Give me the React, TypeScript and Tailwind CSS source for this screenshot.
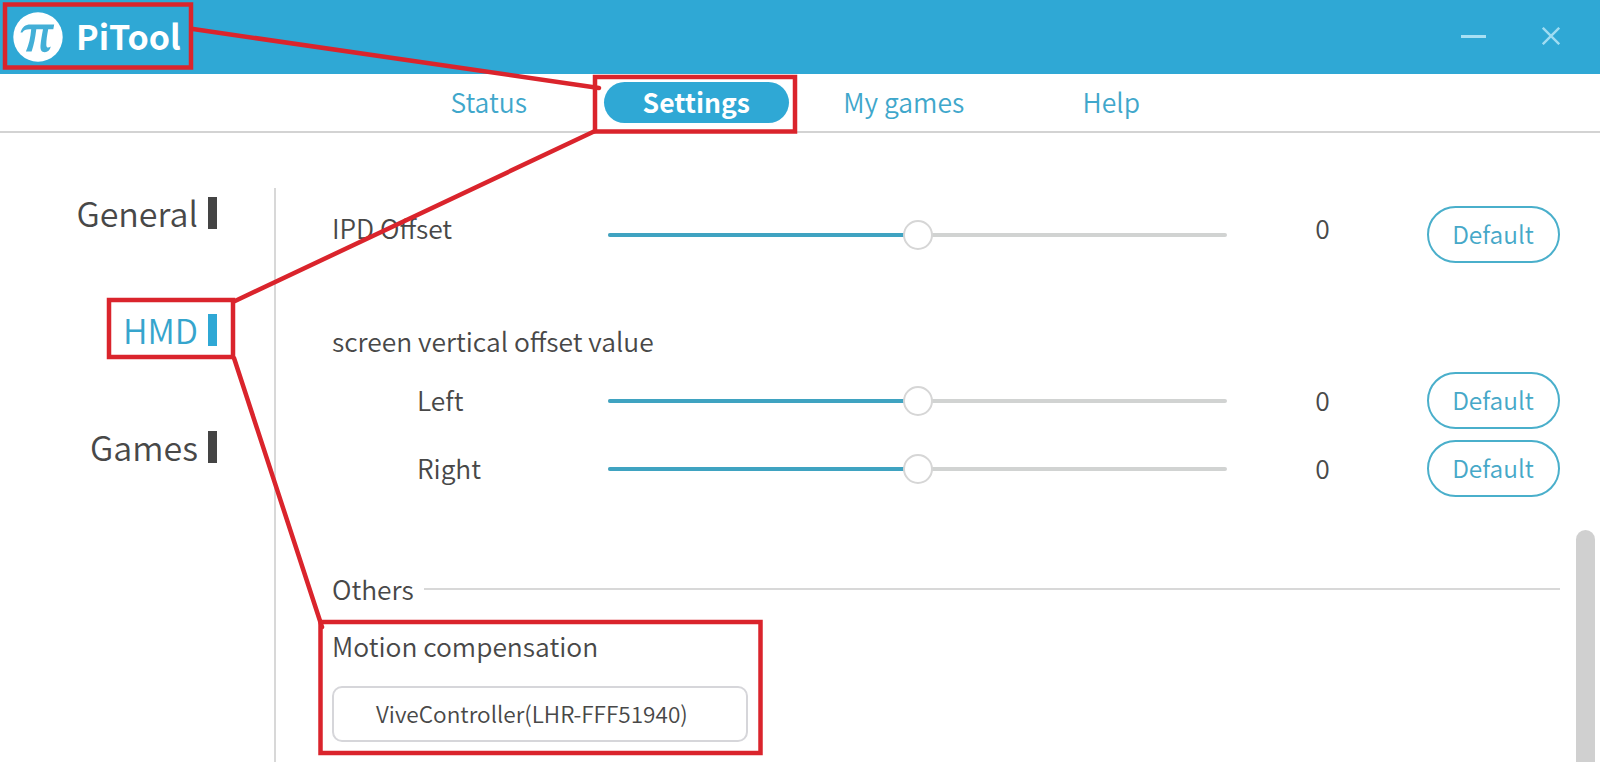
import { clsx } from "clsx";

const NAV_ITEMS = ["Status", "Settings", "My games", "Help"];
const SIDE_ITEMS = ["General", "HMD", "Games"];

function Logo() {
  return (
    <svg width="50" height="50" viewBox="0 0 50 50">
      <circle cx="25" cy="25" r="24.7" fill="#fff" />
      <path
        fill="#43afd7"
        d="M7.5 20.5C9.5 14.8 12.2 12.6 17.5 12.6H41.2L40.3 17.2H35.2C34 23.5 33.3 28.5 33.3 32.5C33.3 36 35 36.2 37.8 34.6C37 38.2 34.6 40.2 31.8 40.2C28.4 40.2 27.2 37.6 27.5 33.5C27.9 28.5 28.9 23 30 17.2H23.3C22.2 26 20.9 33 18.6 39.6H12.9C15.9 32.5 17.5 25.5 18.2 17.2H16.4C12.6 17.2 10.8 18 9.4 20.5Z"
      />
    </svg>
  );
}

function TitleBar() {
  return (
    <header className="flex h-[74px] items-center justify-between bg-[#2fa8d5] pl-[13px] pr-10">
      <div className="flex items-center gap-[13px]">
        <Logo />
        <span className="pb-[3px] text-[34px] font-bold leading-[67px] text-white">PiTool</span>
      </div>
      <div className="flex items-center gap-14 pb-[2px]">
        <span className="h-[3px] w-[25px] bg-[#a8e0f4]" />
        <svg width="18" height="18" viewBox="0 0 18 18" stroke="#a0dcf2" strokeWidth="2.4">
          <path d="M0.8 0.8L17.2 17.2M17.2 0.8L0.8 17.2" />
        </svg>
      </div>
    </header>
  );
}

function Nav({ active }: { active: string }) {
  return (
    <nav className="flex h-[59px] border-b-2 border-[#d3d3d3] pl-[385px] pt-2">
      {NAV_ITEMS.map(item => (
        <div key={item} className="flex w-[207.5px] justify-center">
          <span
            className={clsx(
              "flex h-[41px] w-[185px] items-center justify-center rounded-full pb-px text-[26.5px] leading-none",
              item === active ? "bg-[#2fa8d5] font-bold text-white" : "font-[350] text-[#3fa7cb]",
            )}
          >
            {item}
          </span>
        </div>
      ))}
    </nav>
  );
}

function Sidebar({ active }: { active: string }) {
  return (
    <aside className="w-[274px] pt-[21px]">
      {SIDE_ITEMS.map(item => (
        <div key={item} className="flex h-[117px] items-center justify-end gap-[10px] pr-[57px]">
          <span
            className={clsx(
              "text-[34px] font-[350] leading-none",
              item === active ? "text-[#36a5cd]" : "text-[#484848]",
            )}
          >
            {item}
          </span>
          <span className={clsx("h-8 w-[9px]", item === active ? "bg-[#2fa8d5]" : "bg-[#444]")} />
        </div>
      ))}
    </aside>
  );
}

function Slider({ value }: { value: number }) {
  // range is -50..50, 0 sits in the middle
  const pct = value + 50;
  return (
    <div className="relative flex h-[30px] w-[619px] items-center">
      <div className="h-1 w-full overflow-hidden rounded-full bg-[#d1d3d2]">
        <div className="h-full bg-[#3fa3c1]" style={{ width: `${pct}%` }} />
      </div>
      <span
        className="absolute size-[30px] -translate-x-1/2 rounded-full border-2 border-[#d6d6d6] bg-white"
        style={{ left: `${pct}%` }}
      />
    </div>
  );
}

function OffsetRow({ label, value, indent, raised }: { label: string; value: number; indent?: boolean; raised?: boolean }) {
  const lift = raised ? "pb-[12px]" : "pb-px";
  return (
    <div className="flex h-[57px] items-center">
      <span className={clsx("w-[276px]", lift, indent && "pl-[85px]")}>{label}</span>
      <Slider value={value} />
      <span className={clsx("w-[191px] text-center", lift)}>{value}</span>
      <button className="ml-[9px] h-[57px] w-[133px] rounded-full border-2 border-[#4aafcb] pr-px text-[24.5px] text-[#46a8c8]">
        Default
      </button>
    </div>
  );
}

function HmdSettings() {
  return (
    <main className="flex flex-1 flex-col border-l-2 border-[#d8d8d8] text-[26.4px] font-[350] leading-none text-[#484848]">
      <div className="flex flex-col pl-[56px] pt-[18px]">
        <OffsetRow label="IPD Offset" value={0} raised />
        <h2 className="mt-[65px] h-[44px]">screen vertical offset value</h2>
        <OffsetRow label="Left" value={0} indent />
        <div className="mt-[11px]">
          <OffsetRow label="Right" value={0} indent />
        </div>
        <div className="mt-[77px] flex h-[29px] items-center gap-[10px] pr-[40px]">
          <span className="pt-px">Others</span>
          <span className="h-[2px] flex-1 bg-[#d8d8d8]" />
        </div>
        <h2 className="mt-[30px] h-[27px]">Motion compensation</h2>
        <div className="mt-[26px] flex h-[56px] w-[416px] items-center rounded-[10px] border-2 border-[#d6d6da] pl-[42px] pt-px text-[22.6px]">
          ViveController(LHR-FFF51940)
        </div>
      </div>
    </main>
  );
}

// Red boxes and the lines that lead from one to the next
function Callouts() {
  return (
    <svg
      className="pointer-events-none absolute inset-0"
      width="1600"
      height="762"
      fill="none"
      stroke="#da242c"
      strokeWidth="4.5"
      strokeLinecap="round"
    >
      <rect x="5" y="4.5" width="186" height="63" />
      <path d="M193 29L599 88" />
      <rect x="595" y="77" width="200" height="54.5" />
      <path d="M595 131L235 301" />
      <rect x="109" y="300" width="124" height="57" />
      <path d="M234 358L322 627" />
      <rect x="320.5" y="622" width="440" height="131" />
    </svg>
  );
}

export default function App() {
  return (
    <div className="relative flex h-[762px] w-[1600px] flex-col overflow-hidden bg-white font-['Noto_Sans_CJK_SC',sans-serif]">
      <TitleBar />
      <Nav active="Settings" />
      <div className="flex flex-1">
        <Sidebar active="HMD" />
        <div className="flex flex-1 flex-col pt-[55px]">
          <HmdSettings />
        </div>
      </div>
      <div className="absolute left-[1576px] top-[530px] h-[260px] w-[19px] rounded-full bg-[#d0d0d0]" />
      <Callouts />
    </div>
  );
}
